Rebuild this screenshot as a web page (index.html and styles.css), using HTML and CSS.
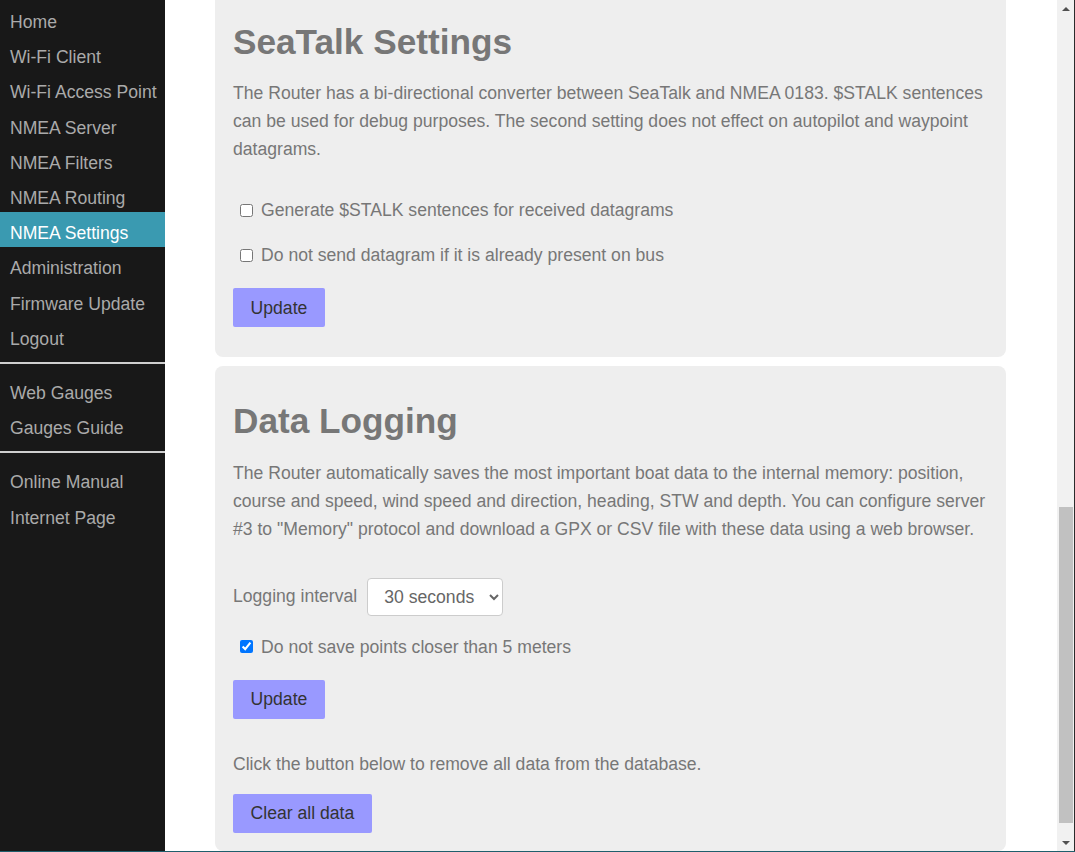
FILE: index.html
```html
<!DOCTYPE html>
<html lang="en">
<head>
<meta charset="utf-8">
<title>NMEA Settings</title>
<link rel="stylesheet" href="styles.css">
</head>
<body>
<div class="app">
  <nav class="sidebar">
    <a class="nav-item" href="#">Home</a>
    <a class="nav-item" href="#">Wi-Fi Client</a>
    <a class="nav-item" href="#">Wi-Fi Access Point</a>
    <a class="nav-item" href="#">NMEA Server</a>
    <a class="nav-item" href="#">NMEA Filters</a>
    <a class="nav-item" href="#">NMEA Routing</a>
    <a class="nav-item active" href="#">NMEA Settings</a>
    <a class="nav-item" href="#">Administration</a>
    <a class="nav-item" href="#">Firmware Update</a>
    <a class="nav-item" href="#">Logout</a>
    <hr class="nav-sep">
    <a class="nav-item" href="#">Web Gauges</a>
    <a class="nav-item" href="#">Gauges Guide</a>
    <hr class="nav-sep">
    <a class="nav-item" href="#">Online Manual</a>
    <a class="nav-item" href="#">Internet Page</a>
  </nav>
  <main class="main">
    <div class="content">
      <section class="card card-first">
        <h1 class="card-title">SeaTalk Settings</h1>
        <p class="text">The Router has a bi-directional converter between SeaTalk and NMEA 0183. $STALK sentences can be used for debug purposes. The second setting does not effect on autopilot and waypoint datagrams.</p>
        <label class="check-row check-first"><input type="checkbox" class="check"><span>Generate $STALK sentences for received datagrams</span></label>
        <label class="check-row check-next"><input type="checkbox" class="check"><span>Do not send datagram if it is already present on bus</span></label>
        <button class="btn btn-after-check">Update</button>
      </section>
      <section class="card card-second">
        <h1 class="card-title">Data Logging</h1>
        <p class="text">The Router automatically saves the most important boat data to the internal memory: position, course and speed, wind speed and direction, heading, STW and depth. You can configure server #3 to "Memory" protocol and download a GPX or CSV file with these data using a web browser.</p>
        <div class="select-row">
          <span class="select-label">Logging interval</span>
          <select class="select">
            <option>30 seconds</option>
          </select>
        </div>
        <label class="check-row check-after-select"><input type="checkbox" class="check" checked><span>Do not save points closer than 5 meters</span></label>
        <button class="btn btn-after-check">Update</button>
        <p class="text text-after-btn">Click the button below to remove all data from the database.</p>
        <button class="btn btn-after-text">Clear all data</button>
      </section>
    </div>
  </main>
  <div class="scrollbar">
    <div class="sb-btn"><span class="arrow-up"></span></div>
    <div class="sb-track">
      <div class="sb-thumb"></div>
    </div>
    <div class="sb-btn"><span class="arrow-down"></span></div>
  </div>
</div>
</body>
</html>
```

FILE: styles.css
```css
html, body {
  margin: 0;
  padding: 0;
  overflow: hidden;
}

body {
  font-family: "Liberation Sans", Arial, sans-serif;
  font-size: 17.6px;
  color: #777;
  background: #fff;
}

.app {
  display: flex;
  height: 851px;
  border-bottom: 1px solid #1f5e6c;
  overflow: hidden;
}

/* Sidebar */
.sidebar {
  flex: 0 0 165px;
  width: 165px;
  min-width: 0;
  overflow: hidden;
  background: #181818;
  display: flex;
  flex-direction: column;
  padding-top: 1px;
}

.nav-item {
  display: block;
  padding: 11px 10px 3px;
  line-height: 21.2px;
  color: #aaa;
  text-decoration: none;
  white-space: nowrap;
}

.nav-item.active {
  background: #3a9ab1;
  color: #fff;
}

.nav-sep {
  border: 0;
  height: 2px;
  flex: 0 0 2px;
  background: #cfcfcf;
  margin: 9px 0 8px;
}

/* Main */
.main {
  flex: 1 1 auto;
  min-width: 0;
  background: #fff;
  overflow: hidden;
}

.content {
  margin-top: -13px;
  padding: 0 51px 0 50px;
  display: flex;
  flex-direction: column;
  gap: 9px;
}

.card {
  background: #eee;
  border-radius: 8px;
  padding: 12px 18px;
  display: flex;
  flex-direction: column;
  align-items: flex-start;
}

.card-first {
  padding-bottom: 30px;
}

.card-second {
  padding-bottom: 18px;
}

.card-title {
  margin: 23px 0 18px;
  font-size: 35.2px;
  font-weight: bold;
  line-height: 39.3px;
  color: #777;
}

.text {
  margin: 0;
  line-height: 28px;
}

.check-row {
  display: flex;
  align-items: center;
  line-height: 28px;
}

.check {
  width: 13px;
  height: 13px;
  margin: 0 8px 0 7px;
}

.check-first {
  margin-top: 33px;
}

.check-next {
  margin-top: 17px;
}

.check-after-select {
  margin-top: 17px;
}

.btn {
  font-family: "Liberation Sans", Arial, sans-serif;
  font-size: 17.6px;
  line-height: 20px;
  color: #333;
  background: #9999ff;
  border: 0;
  border-radius: 2px;
  padding: 9.5px 17.6px;
}

.btn-after-check {
  margin-top: 19px;
}

.text-after-btn {
  margin-top: 31px;
}

.btn-after-text {
  margin-top: 16px;
}

.select-row {
  display: flex;
  align-items: center;
  gap: 10px;
  margin-top: 35px;
}

.select {
  font-family: "Liberation Sans", Arial, sans-serif;
  font-size: 17.6px;
  color: #666;
  background: #fff;
  border: 1px solid #ccc;
  border-radius: 4px;
  height: 38px;
  width: 136px;
  padding: 0 8px 0 12px;
}

/* Fake scrollbar */
.scrollbar {
  flex: 0 0 17px;
  background: #f1f1f1;
  border-right: 1px solid #2b2b2b;
  display: flex;
  flex-direction: column;
}

.sb-btn {
  height: 17px;
  flex: 0 0 17px;
  display: flex;
  align-items: center;
  justify-content: center;
}

.arrow-up {
  width: 0;
  height: 0;
  border-left: 4px solid transparent;
  border-right: 4px solid transparent;
  border-bottom: 4px solid #505050;
}

.arrow-down {
  width: 0;
  height: 0;
  border-left: 4px solid transparent;
  border-right: 4px solid transparent;
  border-top: 4px solid #505050;
}

.sb-track {
  flex: 1 1 auto;
  display: flex;
  flex-direction: column;
  justify-content: flex-end;
  padding: 0 1px 11px 2px;
}

.sb-thumb {
  height: 316px;
  background: #c1c1c1;
}
```
